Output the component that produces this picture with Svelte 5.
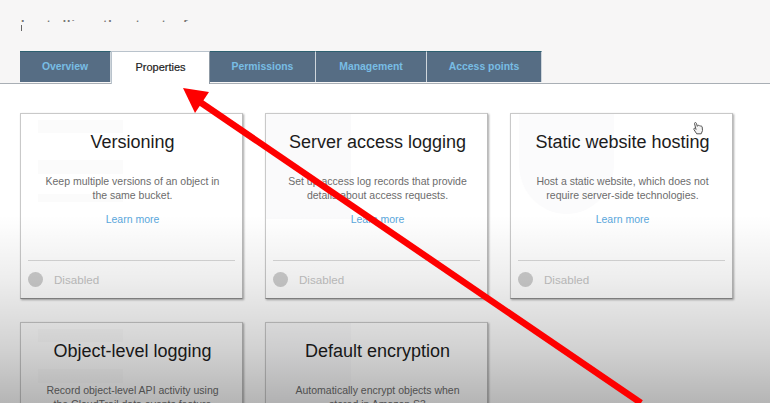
<script>
  const tabs = [
    { label: 'Overview', w: 91 },
    { label: 'Properties', w: 99, active: true },
    { label: 'Permissions', w: 106 },
    { label: 'Management', w: 111 },
    { label: 'Access points', w: 115 }
  ];
  const cards = [
    { title: 'Versioning', lines: ['Keep multiple versions of an object in', 'the same bucket.'], status: true, ghost: 'bars' },
    { title: 'Server access logging', lines: ['Set up access log records that provide', 'details about access requests.'], status: true, ghost: 'doc' },
    { title: 'Static website hosting', lines: ['Host a static website, which does not', 'require server-side technologies.'], status: true, ghost: 'globe' },
    { title: 'Object-level logging', lines: ['Record object-level API activity using', 'the CloudTrail data events feature'], ghost: 'bars' },
    { title: 'Default encryption', lines: ['Automatically encrypt objects when', 'stored in Amazon S3'], ghost: 'doc' }
  ];
</script>

<div class="page">
  <header class="top">
    <div class="cut"><span>Installing the test of</span></div>
    <i class="stray"></i>
    <nav class="tabs">
      {#each tabs as t}
        <div class="tab" class:active={t.active} style="width:{t.w}px">{t.label}</div>
      {/each}
    </nav>
  </header>

  <main class="grid">
    {#each cards as c}
      <section class="card">
        <div class="ghost {c.ghost}"></div>
        <h2>{c.title}</h2>
        <p>{c.lines[0]}<br />{c.lines[1]}</p>
        <a href="#more">Learn more</a>
        {#if c.status}
          <div class="status"><i></i><span>Disabled</span></div>
        {/if}
      </section>
    {/each}
  </main>

  <div class="shade"></div>

  <svg class="overlay" viewBox="0 0 770 403" width="770" height="403" aria-hidden="true">
    <line x1="197" y1="100" x2="641" y2="403" stroke="#fe0000" stroke-width="6.500" />
    <polygon points="183,88 209,92 195,113" fill="#fe0000" />
    <path d="M694.500 123.500c0-1.200 1.700-1.200 2 0l.8 2.800.3-.6c.5-.7 1.400-.4 1.600.3.500-.6 1.400-.4 1.600.3.600-.3 1.300 0 1.400.7l.3 3.600-1.300 3.200h-4.500l-2.800-4.300c-.6-1 .6-1.700 1.300-.9l.8.8z" fill="#f4f4f4" stroke="#555" stroke-width="1" />
  </svg>
</div>

<style>
  :global(body) { margin: 0; background: #fff; }
  .page {
    position: relative;
    width: 770px;
    height: 403px;
    overflow: hidden;
    background: #fff;
    font-family: "Liberation Sans", Arial, sans-serif;
  }
  .top {
    height: 83px;
    background: #f7f6f6;
    border-bottom: 1px solid #a9afb5;
    display: flex;
    flex-direction: column;
    padding-left: 20px;
    position: relative;
  }
  .cut {
    margin-top: 20px;
    margin-bottom: 29px;
    height: 2px;
    overflow: hidden;
    font-size: 19.500px;
    line-height: 20px;
    color: #777;
  }
  .cut span { display: block; margin-top: -3px; }
  .stray {
    position: absolute;
    left: 21px;
    top: 25px;
    width: 1px;
    height: 6px;
    background: #666;
  }
  .tabs { display: flex; height: 32px; }
  .tab {
    box-sizing: border-box;
    height: 31px;
    background: #566d84;
    border-top: 1px solid #2d6070;
    border-right: 1px solid #cfd6dc;
    color: #78bde4;
    font-size: 10.400px;
    font-weight: 700;
    line-height: 30px;
    text-align: center;
  }
  .tab.active {
    height: 33px;
    background: #fff;
    color: #222;
    font-weight: 400;
    font-size: 11px;
    border-top: 1px solid #b9c3cc;
    border-left: 1px solid #b9c3cc;
    border-right: 1px solid #8f9aa5;
    line-height: 31px;
    position: relative;
    -webkit-text-stroke: .2px #222;
  }
  .grid {
    display: grid;
    grid-template-columns: repeat(3, 223px);
    grid-auto-rows: 186px;
    column-gap: 22px;
    row-gap: 23px;
    padding: 29px 0 0 20px;
  }
  .card {
    box-sizing: border-box;
    position: relative;
    background: #fff;
    border: 1px solid #c9c9c9;
    border-right-color: #bbb;
    border-bottom-color: #8a8a8a;
    box-shadow: 1px 1px 2px rgba(0, 0, 0, .35);
    text-align: center;
    padding-top: 16px;
    padding-left: 2px;
  }
  .ghost { position: absolute; left: 17px; top: 6px; width: 85px; height: 82px; z-index: 0; }
  .ghost.bars {
    background:
      linear-gradient(#fbfbfb, #fbfbfb) 0 0 / 85px 13px no-repeat,
      linear-gradient(#fbfbfb, #fbfbfb) 0 40px / 85px 14px no-repeat,
      linear-gradient(#fbfbfb, #fbfbfb) 0 74px / 85px 8px no-repeat;
  }
  .ghost.doc { left: 0; top: 0; width: 85px; height: 105px; background: #fafafb; }
  .ghost.globe { left: 8px; top: 0; width: 95px; height: 100px; border-radius: 0 0 50% 50%; background: #fbfbfc; }
  h2, p, a { position: relative; }
  h2 {
    margin: 0;
    font-size: 18px;
    font-weight: 400;
    line-height: 24px;
    color: #1c1c1c;
  }
  p {
    margin: 21px 0 0;
    font-size: 10.500px;
    line-height: 13.500px;
    color: #6c6c6c;
  }
  a {
    display: block;
    margin-top: 11px;
    font-size: 10.500px;
    line-height: 13px;
    color: #5aa7dc;
    text-decoration: none;
  }
  .status {
    position: absolute;
    left: 7px;
    right: 7px;
    bottom: 0;
    height: 37px;
    border-top: 1px solid #d8d8d8;
    display: flex;
    align-items: center;
    font-size: 11.600px;
    color: #c4c4c4;
  }
  .status i {
    width: 15px;
    height: 15px;
    border-radius: 50%;
    background: #cdcdcd;
    margin-right: 11px;
  }
  .shade {
    position: absolute;
    inset: 0;
    pointer-events: none;
    background: linear-gradient(to bottom, rgba(0,0,0,0) 215px, rgba(0,0,0,.07) 280px, rgba(0,0,0,.18) 350px, rgba(0,0,0,.29) 403px);
  }
  .overlay { position: absolute; left: 0; top: 0; pointer-events: none; }
</style>
